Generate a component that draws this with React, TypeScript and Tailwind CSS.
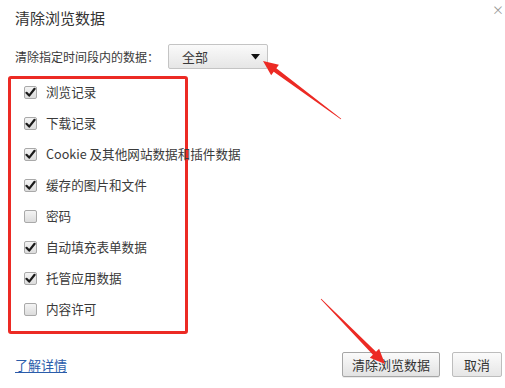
import React from "react";

const items: { label: string; checked: boolean }[] = [
  { label: "浏览记录", checked: true },
  { label: "下载记录", checked: true },
  { label: "Cookie 及其他网站数据和插件数据", checked: true },
  { label: "缓存的图片和文件", checked: true },
  { label: "密码", checked: false },
  { label: "自动填充表单数据", checked: true },
  { label: "托管应用数据", checked: true },
  { label: "内容许可", checked: false },
];

function Checkbox({ checked }: { checked: boolean }) {
  return (
    <div className="w-[13px] h-[13px] rounded-[2px] border border-[#a9a9a9] bg-gradient-to-b from-[#f4f4f4] to-[#dcdcdc] flex items-center justify-center shrink-0">
      {checked && (
        <svg width="11" height="11" viewBox="0 0 11 11">
          <path d="M1.5 5.8 L4.2 8.6 L9.6 1.8" fill="none" stroke="#1a1a1a" strokeWidth="2.2" strokeLinecap="round" strokeLinejoin="round" />
        </svg>
      )}
    </div>
  );
}

function arrowPoints(tx: number, ty: number, hx: number, hy: number) {
  const dx = hx - tx;
  const dy = hy - ty;
  const len = Math.sqrt(dx * dx + dy * dy);
  const ux = dx / len;
  const uy = dy / len;
  const px = -uy;
  const py = ux;
  const headLen = 15;
  const headW = 6.5;
  const bx = hx - ux * headLen;
  const by = hy - uy * headLen;
  const tailW = 0.4;
  const baseW = 2.2;
  const pts = [
    [tx + px * tailW, ty + py * tailW],
    [bx + px * baseW, by + py * baseW],
    [bx + px * headW, by + py * headW],
    [hx, hy],
    [bx - px * headW, by - py * headW],
    [bx - px * baseW, by - py * baseW],
    [tx - px * tailW, ty - py * tailW],
  ];
  return pts.map((p) => p.join(",")).join(" ");
}

export default function App() {
  return (
    <div
      className="relative w-[505px] h-[388px] bg-white overflow-hidden text-[#3a3a3a]"
      style={{ fontFamily: '"Noto Sans CJK SC", "Noto Sans", sans-serif' }}
    >
      <div className="flex flex-col pt-[8px]">
        <div className="px-[15px] text-[15px] leading-[20px] text-[#333]">清除浏览数据</div>

        <div className="flex items-center mt-[16px] px-[15px] gap-[9px]">
          <span className="text-[12px] leading-[25px] whitespace-nowrap">清除指定时间段内的数据：</span>
          <div className="w-[100px] h-[25px] border border-[#c4c4c4] rounded-[2px] bg-gradient-to-b from-[#fafafa] to-[#e6e6e6] flex items-center justify-between pl-[13px] pr-[7px]">
            <span className="text-[13px] leading-none">全部</span>
            <svg width="9" height="6" viewBox="0 0 9 6">
              <path d="M0 0 L9 0 L4.5 5.5 Z" fill="#111" />
            </svg>
          </div>
        </div>

        <div className="ml-[8px] mt-[7px] w-[180px] border-[3px] border-[#ec2a24] rounded-[3px] flex flex-col gap-[11px] pt-[3px] pb-[12px] pl-[13px]">
          {items.map((it) => (
            <div key={it.label} className="h-[20px] flex items-center gap-[9px] whitespace-nowrap">
              <Checkbox checked={it.checked} />
              <span className="text-[12.6px] leading-[20px] text-[#3a3a3a]">{it.label}</span>
            </div>
          ))}
        </div>

        <div className="flex items-center justify-between mt-[18px] pl-[15px] pr-[3px]">
          <a className="text-[13px] text-[#2a5caa] underline underline-offset-2 cursor-pointer">了解详情</a>
          <div className="flex items-center gap-[12px]">
            <button className="w-[98px] h-[25px] border border-[#a6a6a6] rounded-[2px] bg-gradient-to-b from-[#fbfbfb] to-[#e2e2e2] text-[13px] text-[#333] shadow-[0_1px_0_rgba(0,0,0,0.08)]">
              清除浏览数据
            </button>
            <button className="w-[50px] h-[25px] border border-[#bdbdbd] rounded-[2px] bg-gradient-to-b from-[#fbfbfb] to-[#e6e6e6] text-[13px] text-[#333]">
              取消
            </button>
          </div>
        </div>
      </div>

      <span className="absolute right-[1px] top-[1px] text-[12px] text-[#999]">×</span>

      <svg className="absolute inset-0 pointer-events-none" width="505" height="388" viewBox="0 0 505 388">
        <polygon points={arrowPoints(341, 119, 263, 61)} fill="#ec2a24" />
        <polygon points={arrowPoints(321, 299, 385, 364)} fill="#ec2a24" />
      </svg>
    </div>
  );
}
